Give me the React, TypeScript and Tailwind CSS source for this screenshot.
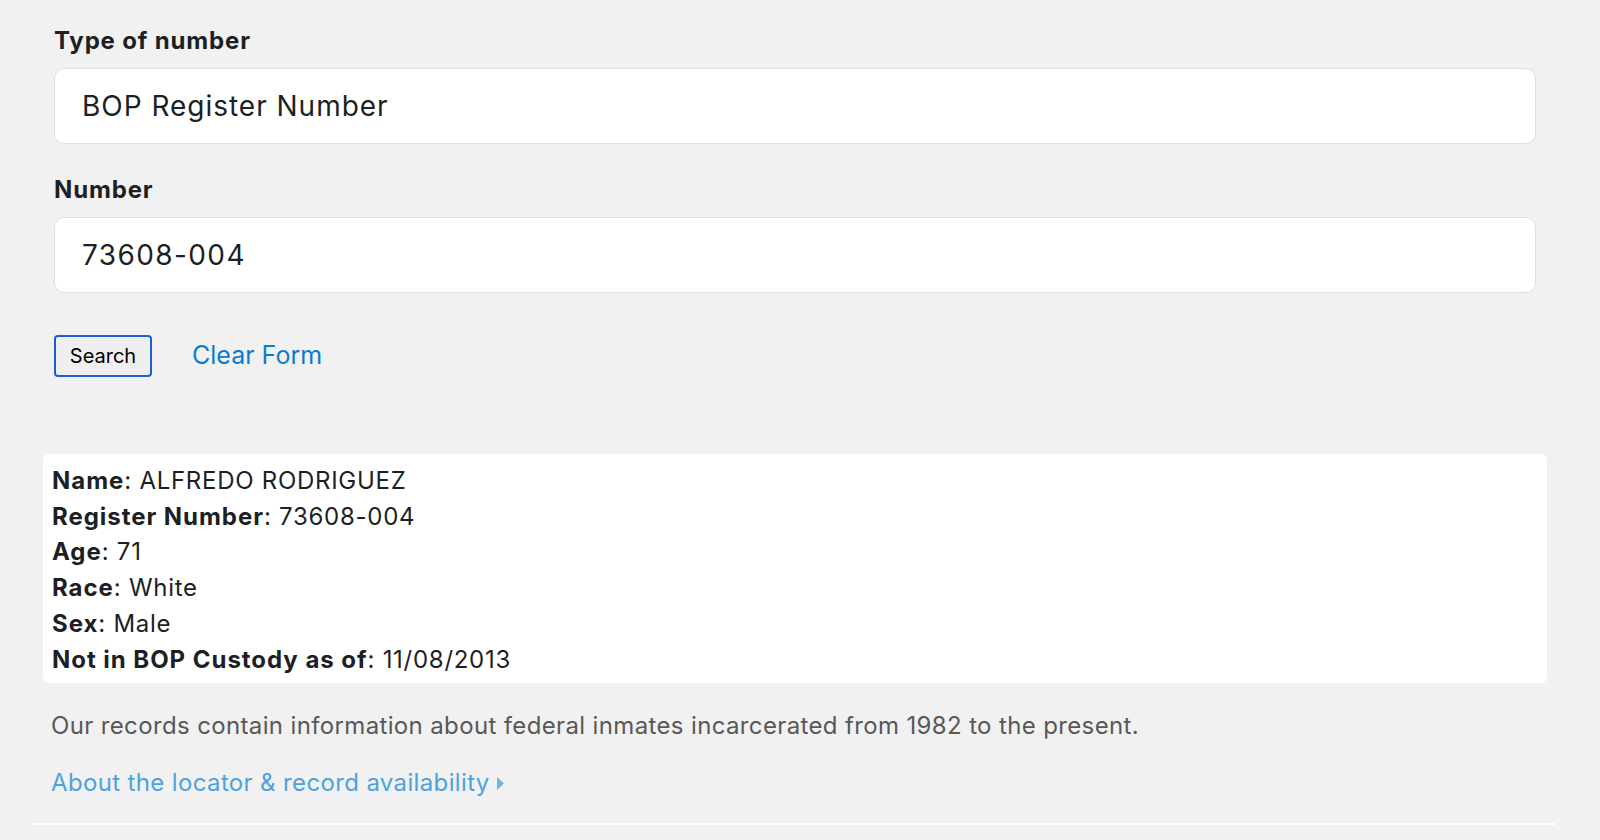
const fields = [
  { label: "Name", value: "ALFREDO RODRIGUEZ" },
  { label: "Register Number", value: "73608-004" },
  { label: "Age", value: "71" },
  { label: "Race", value: "White" },
  { label: "Sex", value: "Male" },
  { label: "Not in BOP Custody as of", value: "11/08/2013" },
];

export default function App() {
  return (
    <div className="min-h-screen bg-[#f1f1f1] font-['Inter',sans-serif] text-[#1c1f23]">
      <form className="px-[54px] pt-[23px]" onSubmit={(e) => e.preventDefault()}>
        <label className="block text-[24px] font-bold leading-[36px] tracking-[0.035em]">Type of number</label>
        <div className="mt-[9px] flex h-[76px] w-[1482px] items-center rounded-[10px] border border-[#dcdfe5] bg-white px-[27px] text-[28px] tracking-[0.035em]">
          BOP Register Number
        </div>

        <label className="mt-[28px] block text-[24px] font-bold leading-[36px] tracking-[0.035em]">Number</label>
        <div className="mt-[9px] flex h-[76px] w-[1482px] items-center rounded-[10px] border border-[#dcdfe5] bg-white px-[27px] text-[28px] tracking-[0.05em]">
          73608-004
        </div>

        <div className="mt-[42px] flex items-center gap-[40px]">
          <button
            type="submit"
            className="h-[42px] w-[98px] rounded-[4px] border-2 border-[#1a5fd6] bg-[#efefef] text-[20px] text-black"
          >
            Search
          </button>
          <a href="#" className="text-[25px] text-[#0b7ccc]">
            Clear Form
          </a>
        </div>
      </form>

      <div className="mx-[43px] mt-[77px] w-[1504px] rounded-[6px] bg-white pl-[9px] pt-[9px] pb-[6px] text-[24px] leading-[35.7px] tracking-[0.03em]">
        {fields.map((f) => (
          <div key={f.label}>
            <span className="font-bold tracking-[0.04em]">{f.label}</span>: {f.value}
          </div>
        ))}
      </div>

      <div className="px-[51px]">
        <p className="mt-[25px] text-[24px] leading-[36px] tracking-[0.015em] text-[#585858]">
          Our records contain information about federal inmates incarcerated from 1982 to the present.
        </p>
        <a href="#" className="mt-[21px] flex items-center text-[24px] leading-[36px] tracking-[0.015em] text-[#4da2de]">
          About the locator &amp; record availability
          <svg className="ml-[7px] h-[13px] w-[7px]" viewBox="0 0 7 13">
            <path d="M0 0 L7 6.5 L0 13 Z" fill="#6fb4e6" />
          </svg>
        </a>
      </div>

      <div className="mx-[33px] mt-[22px] h-[2px] w-[1522px] bg-white" />
    </div>
  );
}
